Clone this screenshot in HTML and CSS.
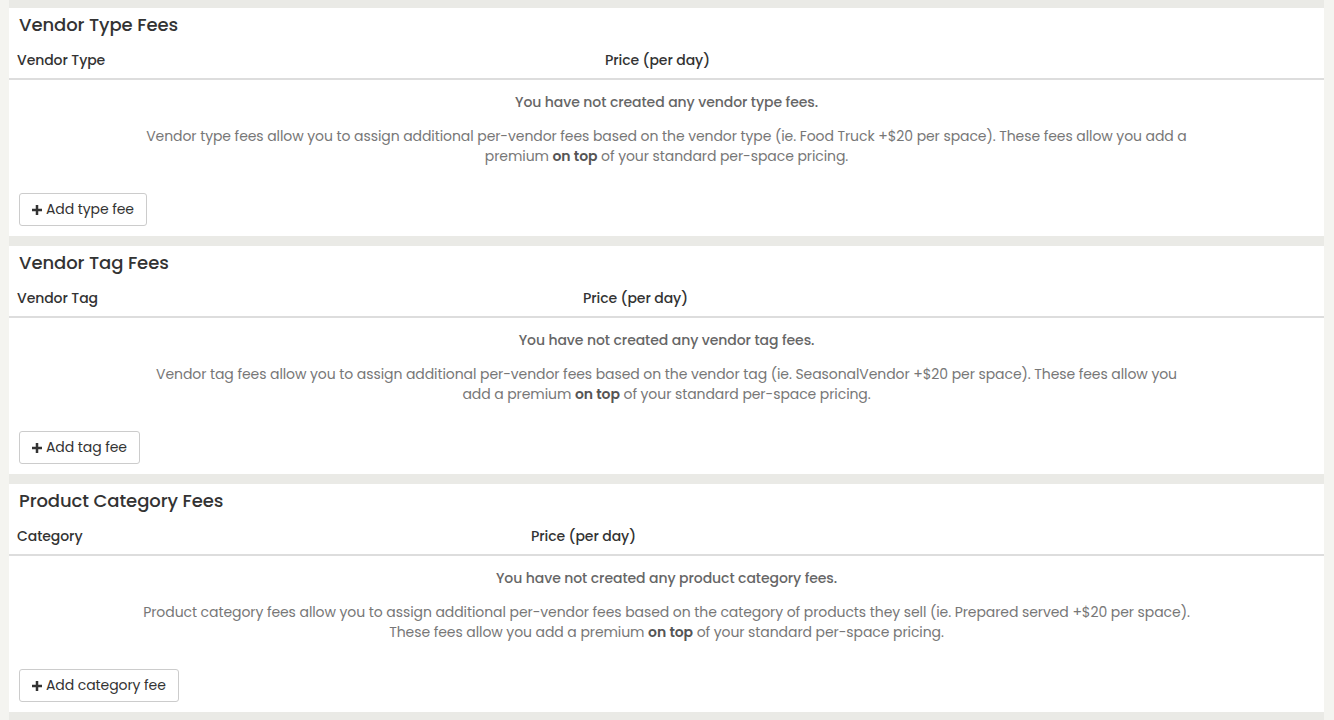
FILE: index.html
```html
<!DOCTYPE html>
<html>
<head>
<meta charset="utf-8">
<link rel="stylesheet" href="styles.css">
</head>
<body>
<div class="page">
  <section class="card">
    <h3 class="card-title">Vendor Type Fees</h3>
    <div class="fee-head fee-head-type">
      <div class="th">Vendor Type</div>
      <div class="th">Price (per day)</div>
    </div>
    <div class="empty">
      <p class="empty-title">You have not created any vendor type fees.</p>
      <p class="empty-desc">Vendor type fees allow you to assign additional per-vendor fees based on the vendor type (ie. Food Truck +$20 per space). These fees allow you add a premium <b>on top</b> of your standard per-space pricing.</p>
    </div>
    <button class="btn"><svg class="plus" viewBox="0 0 12 12"><path d="M4.5 0h3v4.5H12v3H7.5V12h-3V7.5H0v-3h4.5z"/></svg>Add type fee</button>
  </section>
  <section class="card">
    <h3 class="card-title">Vendor Tag Fees</h3>
    <div class="fee-head fee-head-tag">
      <div class="th">Vendor Tag</div>
      <div class="th">Price (per day)</div>
    </div>
    <div class="empty">
      <p class="empty-title">You have not created any vendor tag fees.</p>
      <p class="empty-desc">Vendor tag fees allow you to assign additional per-vendor fees based on the vendor tag (ie. SeasonalVendor +$20 per space). These fees allow you add a premium <b>on top</b> of your standard per-space pricing.</p>
    </div>
    <button class="btn"><svg class="plus" viewBox="0 0 12 12"><path d="M4.5 0h3v4.5H12v3H7.5V12h-3V7.5H0v-3h4.5z"/></svg>Add tag fee</button>
  </section>
  <section class="card">
    <h3 class="card-title">Product Category Fees</h3>
    <div class="fee-head fee-head-cat">
      <div class="th">Category</div>
      <div class="th">Price (per day)</div>
    </div>
    <div class="empty">
      <p class="empty-title">You have not created any product category fees.</p>
      <p class="empty-desc">Product category fees allow you to assign additional per-vendor fees based on the category of products they sell (ie. Prepared served +$20 per space). These fees allow you add a premium <b>on top</b> of your standard per-space pricing.</p>
    </div>
    <button class="btn"><svg class="plus" viewBox="0 0 12 12"><path d="M4.5 0h3v4.5H12v3H7.5V12h-3V7.5H0v-3h4.5z"/></svg>Add category fee</button>
  </section>
</div>
</body>
</html>
```
FILE: styles.css
```css
html, body {
  margin: 0;
  padding: 0;
  background: #f4f4f0;
  font-family: "Poppins", "Open Sans", "Liberation Sans", sans-serif;
  font-size: 14px;
  line-height: 20px;
  letter-spacing: -0.08px;
  color: #333;
}
.page {
  margin-left: 9px;
  width: 1315px;
  min-height: 720px;
  background: #eaeae6;
  padding-top: 8px;
  box-sizing: border-box;
  display: flex;
  flex-direction: column;
  gap: 10px;
}
.card {
  background: #fff;
  height: 228px;
  box-sizing: border-box;
  padding: 7px 0 0;
  display: flex;
  flex-direction: column;
}
.card-title {
  margin: 0 10px;
  font-size: 18px;
  line-height: 20px;
  font-weight: 500;
  color: #333;
}
.fee-head {
  margin-top: 7px;
  display: grid;
  border-bottom: 2px solid #dddddd;
}
.fee-head-type { grid-template-columns: 588px 1fr; }
.fee-head-tag { grid-template-columns: 566px 1fr; }
.fee-head-cat { grid-template-columns: 514px 1fr; }
.th {
  padding: 8px;
  font-weight: 500;
  color: #333;
}
.empty {
  padding: 12px 0 0;
  text-align: center;
}
.empty-title {
  margin: 0;
  font-weight: 500;
  color: #666;
}
.empty-desc {
  margin: 14px auto 0;
  max-width: 1052px;
  color: #777;
}
.empty-desc b {
  font-weight: 600;
  color: #555;
}
.btn {
  align-self: flex-start;
  margin: 27px 0 0 10px;
  height: 33px;
  padding: 0 12px;
  border: 1px solid #cccccc;
  border-radius: 3px;
  background: #fff;
  font-family: inherit;
  font-size: 14px;
  letter-spacing: -0.08px;
  color: #333;
  display: flex;
  align-items: center;
  gap: 4px;
}
.plus {
  width: 10px;
  height: 10px;
  fill: #333;
}
```
